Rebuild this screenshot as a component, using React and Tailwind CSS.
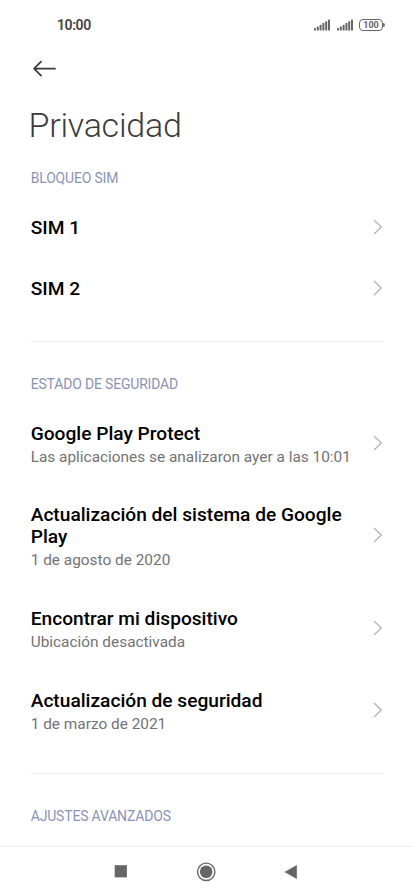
const SIM_ITEMS = [{ title: 'SIM 1' }, { title: 'SIM 2' }];

const SECURITY_ITEMS = [
  { title: 'Google Play Protect', desc: 'Las aplicaciones se analizaron ayer a las 10:01' },
  { title: 'Actualización del sistema de Google Play', desc: '1 de agosto de 2020' },
  { title: 'Encontrar mi dispositivo', desc: 'Ubicación desactivada' },
  { title: 'Actualización de seguridad', desc: '1 de marzo de 2021' },
];

function Signal() {
  return (
    <svg width="16" height="12" viewBox="0 0 16 12" fill="#666">
      <rect x="0" y="9" width="2" height="2.5" rx="0.6" />
      <rect x="2.8" y="7.6" width="2" height="3.9" rx="0.6" />
      <rect x="5.6" y="5.8" width="2" height="5.7" rx="0.6" />
      <rect x="8.4" y="4" width="2" height="7.5" rx="0.6" />
      <rect x="11.2" y="2.2" width="2" height="9.3" rx="0.6" />
      <rect x="14" y="0.4" width="2" height="11.1" rx="0.6" />
    </svg>
  );
}

function Battery() {
  return (
    <div className="flex items-center">
      <div className="flex h-3 w-6 items-center justify-center rounded-[4px] border-[1.5px] border-[#666] text-[9px] leading-none font-bold text-[#666]">
        100
      </div>
      <div className="h-1 w-[1.5px] rounded-r bg-[#777]" />
    </div>
  );
}

function Chevron({ raised }) {
  return (
    <svg className={raised ? 'mb-[5px] shrink-0' : 'mb-0.5 shrink-0'} width="10" height="16" viewBox="0 0 10 16" fill="none" stroke="#b4b4b4" strokeWidth="1.3">
      <path d="M1 1l7.3 7L1 15" />
    </svg>
  );
}

function Row({ title, desc }) {
  return (
    <div className="flex items-center justify-between">
      <div className="w-[325px] pl-[0.7px]">
        <h3 className="text-[19.15px] leading-[22px] font-medium text-black">{title}</h3>
        {desc && <p className="mt-px text-[15.4px] leading-[22px] whitespace-nowrap text-[#737373]">{desc}</p>}
      </div>
      <Chevron raised={Boolean(desc)} />
    </div>
  );
}

function SectionTitle({ children }) {
  return <h2 className="pl-[0.7px] text-[14px] leading-4 tracking-[-0.18px] text-[#8b93b5]">{children}</h2>;
}

export default function App() {
  return (
    <div className="flex h-[896px] w-[413px] flex-col overflow-hidden bg-white font-[Roboto,sans-serif]">
      <header className="flex h-[50px] shrink-0 items-center justify-between pr-[28.5px] pl-[57px]">
        <span className="text-[14px] font-semibold tracking-[-0.4px] text-[#444]">10:00</span>
        <div className="flex items-center gap-[7px]">
          <Signal />
          <Signal />
          <div className="-ml-px"><Battery /></div>
        </div>
      </header>

      <main className="min-h-0 flex-1 px-[30px]">
        <svg className="mt-[10px] ml-[3px]" width="24" height="18" viewBox="0 0 24 18" fill="none" stroke="#3a3a3a" strokeWidth="1.7" strokeLinecap="round" strokeLinejoin="round">
          <path d="M22 8.7H1.3M8 1.7l-6.9 7 6.9 7" />
        </svg>
        <h1 className="mt-[27px] -ml-[1.5px] text-[34px] leading-10 font-light tracking-[-0.25px] text-[#3c3c3c]">Privacidad</h1>

        <div className="mt-[25px]"><SectionTitle>BLOQUEO SIM</SectionTitle></div>
        <div className="mt-[31px] flex flex-col gap-[39px]">
          {SIM_ITEMS.map((item) => <Row key={item.title} {...item} />)}
        </div>

        <hr className="mt-[41.4px] mb-[34px] border-t-[1.5px] border-[#ededed]" />

        <SectionTitle>ESTADO DE SEGURIDAD</SectionTitle>
        <div className="mt-[30.3px] flex flex-col gap-[36.7px]">
          {SECURITY_ITEMS.map((item) => <Row key={item.title} {...item} />)}
        </div>

        <hr className="mt-[38.3px] mb-[34px] border-t-[1.5px] border-[#ededed]" />
        <SectionTitle>AJUSTES AVANZADOS</SectionTitle>
      </main>

      <nav className="flex h-[50px] shrink-0 items-center border-t border-[#eee]">
        <svg className="ml-[114px]" width="13" height="13" fill="#666"><rect x="0.7" y="0.2" width="12.2" height="12.2" /></svg>
        <svg className="ml-[69px]" width="20" height="20" fill="none" stroke="#666">
          <circle cx="10.2" cy="9.8" r="8.7" strokeWidth="1.4" />
          <circle cx="10.2" cy="9.8" r="6.3" fill="#666" stroke="none" />
        </svg>
        <svg className="ml-[68px]" width="13" height="14" fill="#666"><path d="M12.8 0v14L0.5 7z" /></svg>
      </nav>
    </div>
  );
}
